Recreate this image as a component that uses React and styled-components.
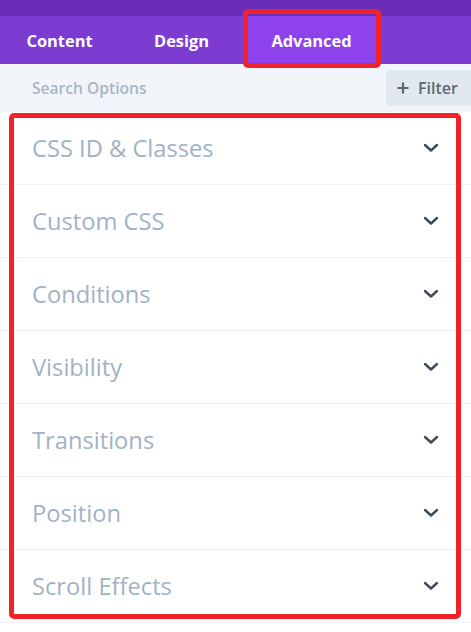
import React from "react";
import styled, { createGlobalStyle } from "styled-components";

const Global = createGlobalStyle`
  html, body { margin: 0; padding: 0; background: #ffffff; }
  body { font-family: "Open Sans", "Noto Sans", sans-serif; }
  * { box-sizing: border-box; }
`;

const Panel = styled.div`
  position: relative;
  width: 471px;
  height: 632px;
  overflow: hidden;
  background: #ffffff;
`;

const TopStrip = styled.div`
  height: 16px;
  background: #6a2db8;
`;

const TabBar = styled.div`
  display: flex;
  height: 48px;
  background: #7c3bd1;
  padding-left: 3px;
  gap: 14px;
`;

const Tab = styled.div`
  display: flex;
  align-items: center;
  justify-content: center;
  width: ${(p) => p.$w}px;
  background: ${(p) => (p.$active ? "#8e42eb" : "transparent")};
  color: #ffffff;
  font-size: 16.4px;
  font-weight: 700;
`;

const SearchRow = styled.div`
  display: flex;
  align-items: center;
  justify-content: space-between;
  height: 48px;
  background: #f1f5f9;
  padding-left: 32px;
`;

const SearchText = styled.span`
  color: #a7b5c6;
  font-size: 15.6px;
  font-weight: 600;
`;

const FilterButton = styled.div`
  display: flex;
  align-items: center;
  gap: 9px;
  height: 36px;
  padding: 0 13px 0 11px;
  background: #e2e8f0;
  border-radius: 3px 0 0 3px;
  color: #5c6877;
  font-size: 16px;
  font-weight: 600;
`;

const List = styled.div`
  display: flex;
  flex-direction: column;
`;

const Row = styled.div`
  display: flex;
  align-items: center;
  justify-content: space-between;
  height: 73px;
  border-bottom: 1px solid #eef1f5;
  padding: 0 32px;
`;

const Label = styled.span`
  color: #a2b2c5;
  font-size: 23.7px;
  font-weight: 400;
`;

const Chevron = styled.svg`
  width: 16px;
  height: 10px;
`;

const Highlight = styled.div`
  position: absolute;
  left: ${(p) => p.$x}px;
  top: ${(p) => p.$y}px;
  width: ${(p) => p.$w}px;
  height: ${(p) => p.$h}px;
  border: 5px solid #f0232b;
  border-radius: 5px;
  pointer-events: none;
`;

const rows = [
  "CSS ID & Classes",
  "Custom CSS",
  "Conditions",
  "Visibility",
  "Transitions",
  "Position",
  "Scroll Effects",
];

export default function App() {
  return (
    <>
      <Global />
      <Panel>
        <TopStrip />
        <TabBar>
          <Tab $w={113}>Content</Tab>
          <Tab $w={103}>Design</Tab>
          <Tab $w={129} $active>Advanced</Tab>
        </TabBar>
        <SearchRow>
          <SearchText>Search Options</SearchText>
          <FilterButton>
            <svg width="12" height="12" viewBox="0 0 12 12">
              <path d="M6 0.5V11.5M0.5 6H11.5" stroke="#5c6877" strokeWidth="2.2" />
            </svg>
            Filter
          </FilterButton>
        </SearchRow>
        <List>
          {rows.map((r) => (
            <Row key={r}>
              <Label>{r}</Label>
              <Chevron viewBox="0 0 16 10">
                <path
                  d="M2 2L8 7.5L14 2"
                  fill="none"
                  stroke="#3e4b5c"
                  strokeWidth="2.4"
                  strokeLinecap="round"
                  strokeLinejoin="round"
                />
              </Chevron>
            </Row>
          ))}
        </List>
        <Highlight $x={243} $y={9} $w={138} $h={59} />
        <Highlight $x={9} $y={113} $w={452} $h={506} />
      </Panel>
    </>
  );
}
